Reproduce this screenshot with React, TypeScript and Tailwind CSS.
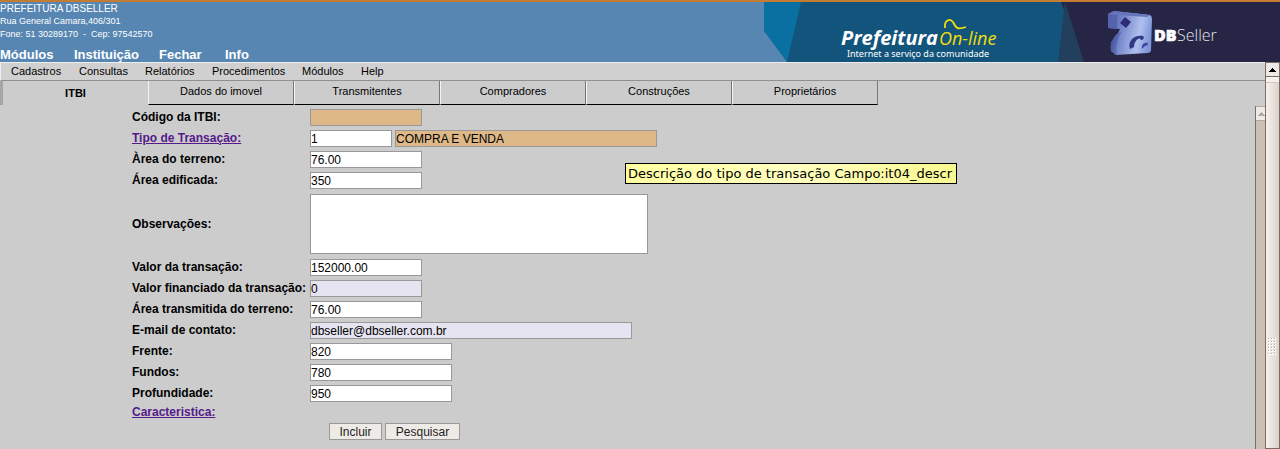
import React from "react";

const modules = [
  { label: "Módulos", width: "w-[74px]" },
  { label: "Instituição", width: "w-[85px]" },
  { label: "Fechar", width: "w-[66px]" },
  { label: "Info", width: "w-[60px]" },
];

const menu = [
  { label: "Cadastros", width: "w-[68px]" },
  { label: "Consultas", width: "w-[66px]" },
  { label: "Relatórios", width: "w-[67px]" },
  { label: "Procedimentos", width: "w-[90px]" },
  { label: "Módulos", width: "w-[59px]" },
  { label: "Help", width: "w-[40px]" },
];

const tabs = ["Dados do imovel", "Transmitentes", "Compradores", "Construções", "Proprietários"];

const inputBase =
  "block h-[17px] border border-[#999999] text-[12px] leading-[15px] text-black outline-none";

type FieldProps = {
  id: string;
  label: string;
  value?: string;
  width?: string;
  color?: string;
  readOnly?: boolean;
};

function Field({ id, label, value = "", width = "w-28", color = "bg-white", readOnly }: FieldProps) {
  return (
    <div className="flex items-center">
      <label htmlFor={id} className="w-[178px] shrink-0 whitespace-nowrap font-bold">
        {label}
      </label>
      <input id={id} defaultValue={value} readOnly={readOnly} className={`${inputBase} ${width} ${color}`} />
    </div>
  );
}

function Banner() {
  return (
    <svg viewBox="0 0 516 60" className="block h-[60px] w-[516px] shrink-0" role="img" aria-label="Prefeitura On-line, DBSeller">
      <defs>
        <linearGradient id="cube" x1="0" y1="0.2" x2="1" y2="0.4">
          <stop offset="0" stopColor="#4b58a8" />
          <stop offset="0.4" stopColor="#7f90d0" />
          <stop offset="0.75" stopColor="#afc0ee" />
          <stop offset="1" stopColor="#7f96d8" />
        </linearGradient>
        <linearGradient id="arm" x1="0" y1="0" x2="1" y2="0.5">
          <stop offset="0" stopColor="#3c4a94" />
          <stop offset="1" stopColor="#6c7dc2" />
        </linearGradient>
      </defs>
      <rect width="516" height="60" fill="#13547c" />
      <path d="M0 0H37L23 60L0 30Z" fill="#0a70a1" />
      <path d="M0 29L23 60H0Z" fill="#5786b2" />
      <path d="M297 0H516V60H319Z" fill="#272545" />
      <path d="M294 60L301 0L320 60Z" fill="#223f5e" />
      <text x="77" y="43" fill="#ffffff" fontFamily="Open Sans" fontSize="20" fontWeight="700" fontStyle="italic">
        Prefeitura
      </text>
      <text x="175" y="43" fill="#f2df0b" fontFamily="Open Sans" fontSize="18" fontStyle="italic">
        On-line
      </text>
      <path d="M181 26C180 18 186 16 189 20C192 26 193 28 202 25" fill="none" stroke="#f2df0b" strokeWidth="1.8" />
      <text x="83" y="55" fill="#ffffff" fontFamily="Noto Sans" fontSize="9">
        Internet a serviço da comunidade
      </text>
      <path d="M344 12L350 9L386 13Q388 14 388 17L387 48Q387 51 383 51L352 53L347 49Q345 39 354 31L356 27L344 26Z" fill="url(#cube)" />
      <path d="M344 12L353 13V27L344 26Z" fill="#5663ac" />
      <path d="M350 9L386 13L383 15L353 13L344 12Z" fill="#6676bd" />
      <path d="M347 49Q345 39 354 31Q359 28 357 31Q351 40 353 53Z" fill="url(#arm)" />
      <path d="M361 15L367 20L362 26L356 21Z" fill="#2e2b78" />
      <path d="M366 47C363 39 371 32 379 34C381 36 379 38 377 38C376 34 370 38 370 45Z" fill="#303984" />
      <path d="M378 47C377 43 380 40 384 41C384 43 383 44 381 44Z" fill="#3c4b9d" />
      <text x="390" y="39" fill="#ffffff" stroke="#ffffff" strokeWidth="0.6" fontFamily="Open Sans" fontSize="16" fontWeight="800">
        DB
      </text>
      <text x="413" y="39" fill="#e4e4ec" fontFamily="Open Sans" fontSize="16" fontWeight="300">
        Seller
      </text>
    </svg>
  );
}

function Arrow({ color }: { color: string }) {
  return (
    <svg viewBox="0 0 7 4" className="h-1 w-[7px] shrink-0" aria-hidden="true">
      <path d="M3 0H4V1H5V2H6V3H7V4H0V3H1V2H2V1H3Z" fill={color} />
    </svg>
  );
}

function OuterScrollbar() {
  return (
    <div className="flex w-[15px] shrink-0 flex-col border border-[#7b6e61]">
      <button aria-label="Rolar para cima" className="flex h-[14px] shrink-0 items-center justify-center border-b border-[#7b6e61] bg-[#eee9e5]">
        <Arrow color="#000000" />
      </button>
      <div className="flex grow flex-col bg-linear-to-r from-[#f6f2ef] to-[#dcd2cb]">
        <div className="h-[6px] shrink-0 border-b border-[#cdc5bf] bg-[#f4f1ee]" />
        <svg viewBox="0 0 9 18" className="mx-auto mt-[255px] h-[18px] w-[9px]" aria-hidden="true">
          {[0, 3, 6, 9, 12, 15].map((y) =>
            [0, 3, 6].map((x) => (
              <g key={`${x}-${y}`}>
                <rect x={x} y={y} width="2" height="2" fill="#ffffff" />
                <rect x={x} y={y} width="1" height="1" fill="#b5aaa1" />
              </g>
            )),
          )}
        </svg>
      </div>
    </div>
  );
}

function InnerScrollbar() {
  return (
    <div className="flex w-[10px] shrink-0 flex-col overflow-hidden border-l border-[#7b6e61] bg-[#cac0b6]">
      <button
        aria-label="Rolar formulário para cima"
        className="flex h-[15px] shrink-0 items-center justify-end border-y border-[#b5a797] bg-[#eeebe7]"
      >
        <Arrow color="#b0aaa4" />
      </button>
    </div>
  );
}

export default function App() {
  return (
    <div className="flex min-h-screen flex-col bg-[#cccccc] font-['Liberation_Sans',Arial,sans-serif] text-black">
      <header className="flex justify-between border-t-2 border-[#c47b32] bg-[#5786b2] text-white">
        <div className="flex flex-col justify-between whitespace-nowrap">
          <address className="text-[9px] leading-[13px] not-italic">
            <p className="text-[10px]">PREFEITURA DBSELLER</p>
            <p>Rua General Camara,406/301</p>
            <p className="whitespace-pre">Fone: 51 30289170  -  Cep: 97542570</p>
          </address>
          <nav className="flex text-[13px] leading-[15px] font-bold">
            {modules.map((m) => (
              <a key={m.label} href="#" className={m.width}>
                {m.label}
              </a>
            ))}
          </nav>
        </div>
        <Banner />
      </header>

      <div className="flex grow">
        <div className="flex min-w-0 grow flex-col">
          <nav className="flex h-[19px] shrink-0 border-b border-t border-t-[#eeeeee] border-b-[#909090] border-l border-l-[#eeeeee] bg-[#d0d0d0] pl-[10px] text-[11px] leading-4">
            {menu.map((m) => (
              <a key={m.label} href="#" className={m.width}>
                {m.label}
              </a>
            ))}
          </nav>

          <div role="tablist" className="mb-px flex h-6 shrink-0 text-[11px]">
            <button
              role="tab"
              aria-selected="true"
              className="w-[148px] border-l-[3px] border-[#a5a5a5] font-bold"
            >
              ITBI
            </button>
            {tabs.map((t) => (
              <button
                key={t}
                role="tab"
                aria-selected="false"
                className="w-[146px] border-b border-l border-r border-b-black border-l-[#f4f4f4] border-r-[#777777] pb-[3px]"
              >
                {t}
              </button>
            ))}
          </div>

          <main className="relative flex grow">
            <form className="flex grow flex-col gap-1 pt-[3px] pb-2 pl-[132px] text-[12px] leading-[13px]">
              <Field id="codigo" label="Código da ITBI:" color="bg-[#deb887]" readOnly />
              <div className="flex items-center">
                <a id="tipo-label" href="#" className="w-[178px] font-bold text-[#551a8b] underline">
                  Tipo de Transação:
                </a>
                <div className="flex gap-[3px]">
                  <input aria-labelledby="tipo-label" defaultValue="1" className={`${inputBase} w-[82px] bg-white`} />
                  <input
                    aria-label="Descrição do tipo de transação"
                    aria-describedby="tipo-tip"
                    readOnly
                    defaultValue="COMPRA E VENDA"
                    className={`${inputBase} w-[262px] bg-[#deb887]`}
                  />
                </div>
              </div>
              <Field id="terreno" label="Àrea do terreno:" value="76.00" />
              <Field id="edificada" label="Área edificada:" value="350" />
              <div className="flex items-center py-px">
                <label htmlFor="obs" className="w-[178px] font-bold">
                  Observações:
                </label>
                <textarea id="obs" className="block h-[60px] w-[338px] resize-none border border-[#999999] bg-white text-[12px] outline-none" />
              </div>
              <Field id="valor" label="Valor da transação:" value="152000.00" />
              <Field id="financiado" label="Valor financiado da transação:" value="0" color="bg-[#e6e4f1]" />
              <Field id="transmitida" label="Área transmitida do terreno:" value="76.00" />
              <Field id="email" label="E-mail de contato:" value="dbseller@dbseller.com.br" width="w-[322px]" color="bg-[#e6e4f1]" />
              <Field id="frente" label="Frente:" value="820" width="w-[142px]" />
              <Field id="fundos" label="Fundos:" value="780" width="w-[142px]" />
              <Field id="profundidade" label="Profundidade:" value="950" width="w-[142px]" />
              <a href="#" className="self-start font-bold text-[#551a8b] underline">
                Caracteristica:
              </a>
              <div className="flex gap-[3px] pl-[197px] text-[12px] text-[#222222]">
                <button type="button" className="h-[17px] w-[53px] border border-[#999999] bg-[#eeebe7] pt-px leading-[14px]">
                  Incluir
                </button>
                <button type="button" className="h-[17px] w-[75px] border border-[#999999] bg-[#eeebe7] pt-px leading-[14px]">
                  Pesquisar
                </button>
              </div>
            </form>
            <div
              id="tipo-tip"
              role="tooltip"
              className="absolute top-[57px] left-[625px] w-[332px] border border-black bg-linear-to-r from-[#ffffa0] via-[#ffffc0] to-[#f8f890] px-[2px] font-['DejaVu_Sans',sans-serif] text-[13px] leading-[19px] whitespace-nowrap"
            >
              Descrição do tipo de transação Campo:it04_descr
            </div>
            <InnerScrollbar />
          </main>
        </div>
        <OuterScrollbar />
      </div>
    </div>
  );
}
